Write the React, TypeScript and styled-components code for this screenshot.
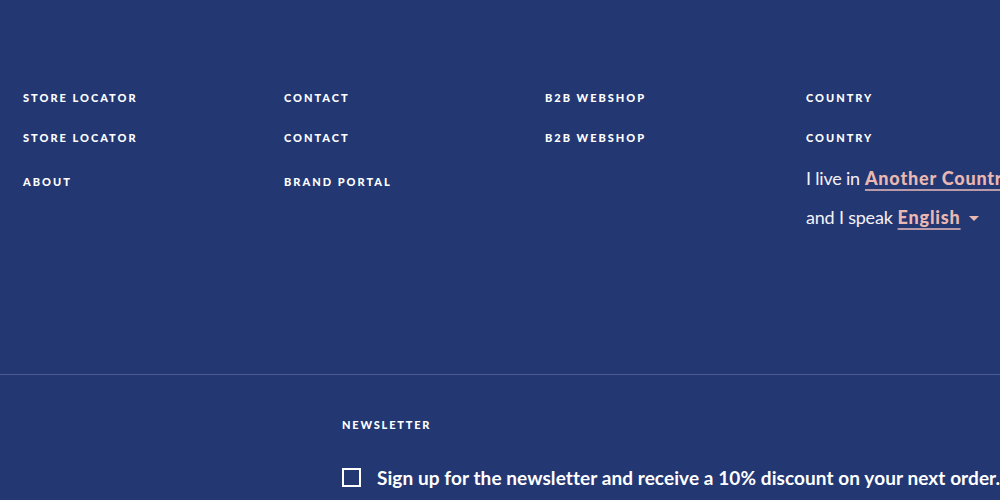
import styled, { createGlobalStyle } from "styled-components";

const GlobalStyle = createGlobalStyle`
  html, body {
    margin: 0;
    padding: 0;
    background: #233773;
    overflow: hidden;
  }
  body {
    font-family: "Lato", "Liberation Sans", sans-serif;
    color: #ffffff;
  }
`;

const Footer = styled.footer`
  width: 1300px;
  min-height: 500px;
  background: #233773;
`;

const Top = styled.div`
  display: grid;
  grid-template-columns: repeat(4, 261px);
  padding: 91px 0 0 23px;
  height: 374px;
  box-sizing: border-box;
`;

const Column = styled.div`
  display: flex;
  flex-direction: column;
`;

const Heading = styled.a<{ $gap?: number }>`
  display: block;
  font-size: 11px;
  font-weight: 900;
  letter-spacing: 2px;
  line-height: 14px;
  text-transform: uppercase;
  color: #ffffff;
  margin-bottom: ${({ $gap }) => $gap ?? 26}px;
`;

const Sentence = styled.p`
  margin: 0;
  font-size: 18px;
  font-weight: 400;
  line-height: 22px;
  letter-spacing: -0.2px;
  color: #f3f1f6;
  white-space: nowrap;
  margin-bottom: 17px;
  display: flex;
  align-items: baseline;
`;

const Pick = styled.a`
  margin-left: 5px;
  font-weight: 900;
  letter-spacing: 0.8px;
  color: #eab8b1;
  text-decoration: underline;
  text-decoration-thickness: 1.5px;
  text-underline-offset: 4px;
  text-decoration-color: #b99aa8;
`;

const Caret = styled.span`
  display: inline-block;
  width: 0;
  height: 0;
  margin-left: 8px;
  border-left: 5px solid transparent;
  border-right: 5px solid transparent;
  border-top: 5px solid #eab8b1;
  transform: translateY(-3px);
`;

const Divider = styled.hr`
  margin: 0;
  border: none;
  border-top: 1px solid #4c5b90;
`;

const Newsletter = styled.section`
  padding: 43px 0 0 342px;
`;

const NewsTitle = styled.h3`
  margin: 0 0 34px;
  font-size: 11px;
  font-weight: 900;
  letter-spacing: 1.8px;
  line-height: 14px;
  text-transform: uppercase;
`;

const CheckRow = styled.label`
  display: flex;
  align-items: center;
  gap: 16px;
  font-size: 19px;
  font-weight: 700;
  letter-spacing: 0.08px;
  white-space: nowrap;
`;

const Box = styled.span`
  width: 15px;
  height: 15px;
  border: 2px solid #ffffff;
  flex-shrink: 0;
`;

const columns = [
  ["Store locator", "Store locator", "About"],
  ["Contact", "Contact", "Brand portal"],
  ["B2B webshop", "B2B webshop"],
];

export default function App() {
  return (
    <>
      <GlobalStyle />
      <Footer>
        <Top>
          {columns.map((links, i) => (
            <Column key={i}>
              {links.map((l, j) => (
                <Heading key={j} $gap={j === 0 ? 26 : 30}>
                  {l}
                </Heading>
              ))}
            </Column>
          ))}
          <Column>
            <Heading $gap={26}>Country</Heading>
            <Heading $gap={22}>Country</Heading>
            <Sentence>
              I live in <Pick>Another Country</Pick>
            </Sentence>
            <Sentence>
              and I speak <Pick>English</Pick>
              <Caret />
            </Sentence>
          </Column>
        </Top>
        <Divider />
        <Newsletter>
          <NewsTitle>Newsletter</NewsTitle>
          <CheckRow>
            <Box />
            Sign up for the newsletter and receive a 10% discount on your next order.
          </CheckRow>
        </Newsletter>
      </Footer>
    </>
  );
}
